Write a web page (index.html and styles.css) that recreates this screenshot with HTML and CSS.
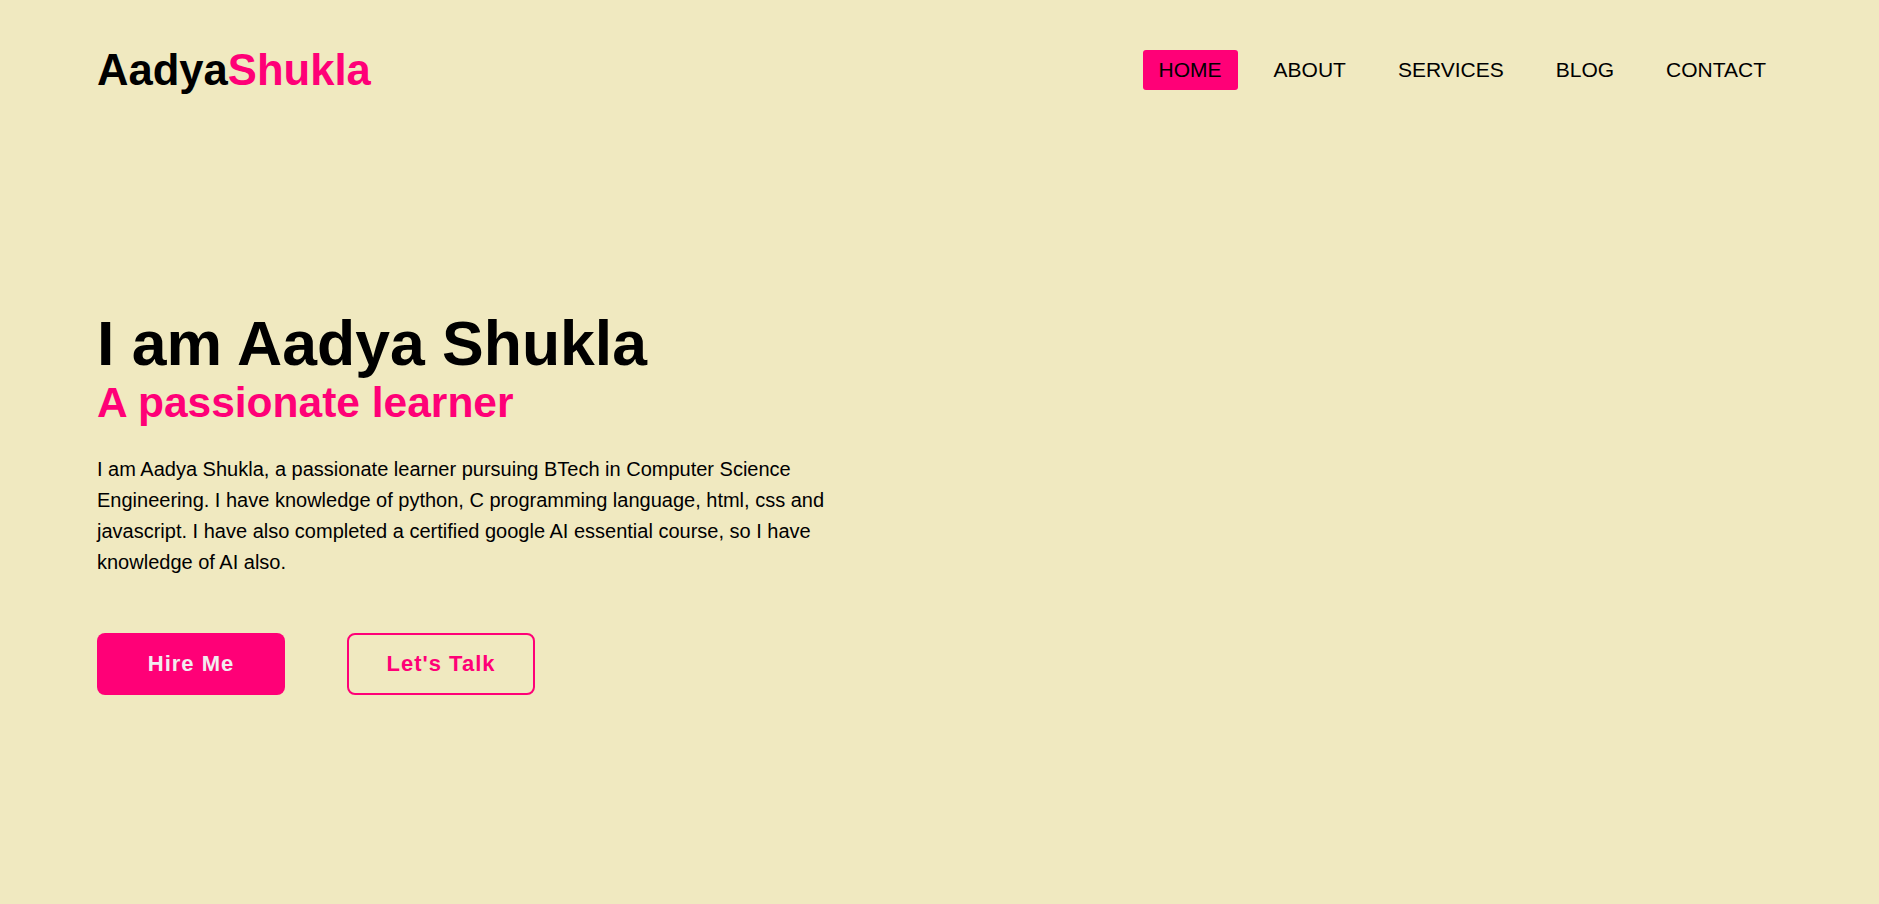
FILE: index.html
```html
<!DOCTYPE html>
<html lang="en">
<head>
<meta charset="UTF-8">
<title>Aadya Shukla</title>
<link rel="stylesheet" href="styles.css">
</head>
<body>
  <header class="header">
    <a class="logo" href="#">Aadya<span class="accent">Shukla</span></a>
    <nav class="nav">
      <a class="nav-link active" href="#">HOME</a>
      <a class="nav-link" href="#">ABOUT</a>
      <a class="nav-link" href="#">SERVICES</a>
      <a class="nav-link" href="#">BLOG</a>
      <a class="nav-link" href="#">CONTACT</a>
    </nav>
  </header>
  <section class="hero">
    <div class="hero-content">
      <h1 class="hero-title">I am Aadya Shukla</h1>
      <h3 class="hero-sub">A passionate learner</h3>
      <p class="hero-text">I am Aadya Shukla, a passionate learner pursuing BTech in Computer Science Engineering. I have knowledge of python, C programming language, html, css and javascript. I have also completed a certified google AI essential course, so I have knowledge of AI also.</p>
      <div class="hero-buttons">
        <a class="btn btn-fill" href="#">Hire Me</a>
        <a class="btn btn-outline" href="#">Let's Talk</a>
      </div>
    </div>
  </section>
</body>
</html>
```
FILE: styles.css
```css
* {
  margin: 0;
  padding: 0;
  box-sizing: border-box;
}

html, body {
  height: 100%;
}

body {
  background: #f0e9c0;
  font-family: "Liberation Sans", Arial, sans-serif;
  color: #000;
  overflow: hidden;
}

a {
  text-decoration: none;
  color: inherit;
}

.header {
  height: 140px;
  padding: 0 97px;
  display: flex;
  align-items: center;
  justify-content: space-between;
}

.logo {
  font-size: 43.6px;
  font-weight: 700;
  color: #000;
}

.accent {
  color: #ff0077;
}

.nav {
  display: flex;
  align-items: center;
  gap: 20px;
}

.nav-link {
  font-size: 21px;
  line-height: 24px;
  padding: 8px 16px;
  border-radius: 3px;
  color: #000;
}

.nav-link.active {
  background: #ff0077;
}

.hero {
  padding: 167px 97px 0;
}

.hero-content {
  width: 760px;
}

.hero-title {
  font-size: 62.5px;
  font-weight: 700;
  line-height: normal;
}

.hero-sub {
  font-size: 42.5px;
  font-weight: 700;
  line-height: normal;
  color: #ff0077;
}

.hero-text {
  margin-top: 27px;
  font-size: 20px;
  line-height: 31px;
}

.hero-buttons {
  margin-top: 55px;
  display: flex;
  gap: 62px;
}

.btn {
  width: 188px;
  height: 62px;
  display: flex;
  align-items: center;
  justify-content: center;
  border-radius: 8px;
  font-size: 22px;
  font-weight: 700;
  letter-spacing: 1px;
}

.btn-fill {
  background: #ff0077;
  color: #f2ecf0;
}

.btn-outline {
  border: 2px solid #ff0077;
  color: #ff0077;
}
```
